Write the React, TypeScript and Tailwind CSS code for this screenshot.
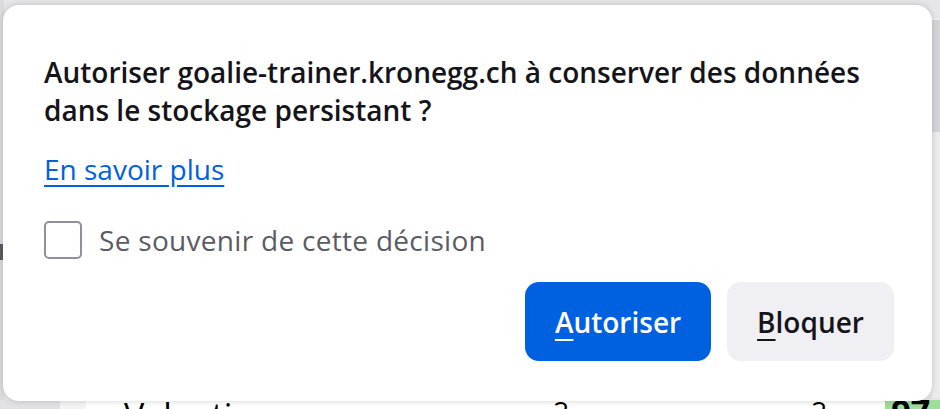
export default function App() {
  return (
    <div
      className="relative h-[409px] w-[940px] overflow-hidden bg-[#e6e6e9]"
      style={{ fontFamily: '"Open Sans", "Noto Sans", sans-serif' }}
    >
      {/* page behind the prompt */}
      <div className="absolute left-0 top-0 h-full w-[4px] bg-[#dcdcdf]">
        <div className="mt-[244px] h-[16px] w-[3px] bg-[#5b5b66]" />
      </div>
      <div className="absolute right-0 top-[18px] h-[380px] w-[8px] bg-[#ececee]">
        <div className="mt-[2px] h-[112px] w-[8px] bg-[#d4d4d8]" />
      </div>
      <div className="absolute bottom-0 left-0 flex h-[9px] w-full items-start overflow-hidden bg-[#ececee]">
        <div className="h-full w-[60px] bg-[#e2e2e5]" />
        <div className="h-full w-[26px] bg-[#f3f3f5]" />
        <div className="flex h-full flex-1 items-start bg-white text-[34px] leading-[34px] text-black">
          <span className="ml-[38px] mt-[-2px]">Valentin</span>
          <span className="ml-[300px] mt-[-6px] text-[28px]">2 mois</span>
          <span className="ml-[180px] mt-[-6px] text-[28px]">2</span>
          <span className="ml-[58px] h-full w-[60px] bg-[#9edd9a] pl-[6px] font-bold">
            <span className="-mt-[6px] block">97</span>
          </span>
        </div>
      </div>

      {/* permission dialog */}
      <div className="absolute left-[3px] top-[5px] flex h-[396px] w-[929px] flex-col rounded-[16px] bg-white pb-[40px] pl-[41px] pr-[38px] pt-[48px] shadow-[0_0_6px_rgba(0,0,0,0.18)]">
        <h1 className="pr-[3px] text-[28px] font-semibold leading-[38px] text-[#15141a]">
          Autoriser goalie-trainer.kronegg.ch à conserver des données dans le
          stockage persistant ?
        </h1>
        <a
          href="#"
          className="mt-[22px] self-start text-[28px] leading-[36px] text-[#0061e0] underline underline-offset-[5px]"
        >
          En savoir plus
        </a>
        <label className="mt-[34px] flex items-center gap-[17px]">
          <span className="h-[38px] w-[38px] rounded-[5px] border-2 border-[#8f8f9d]" />
          <span className="text-[28px] leading-[36px] tracking-[0.3px] text-[#5b5b66]">
            Se souvenir de cette décision
          </span>
        </label>
        <div className="mt-auto flex justify-end gap-[16px]">
          <button className="h-[79px] w-[186px] rounded-[14px] bg-[#0061e0] text-[28px] font-semibold text-white">
            <span className="underline underline-offset-[6px]">A</span>utoriser
          </button>
          <button className="h-[79px] w-[167px] rounded-[14px] bg-[#f0f0f4] text-[28px] font-semibold text-[#15141a]">
            <span className="underline underline-offset-[6px]">B</span>loquer
          </button>
        </div>
      </div>
    </div>
  );
}
